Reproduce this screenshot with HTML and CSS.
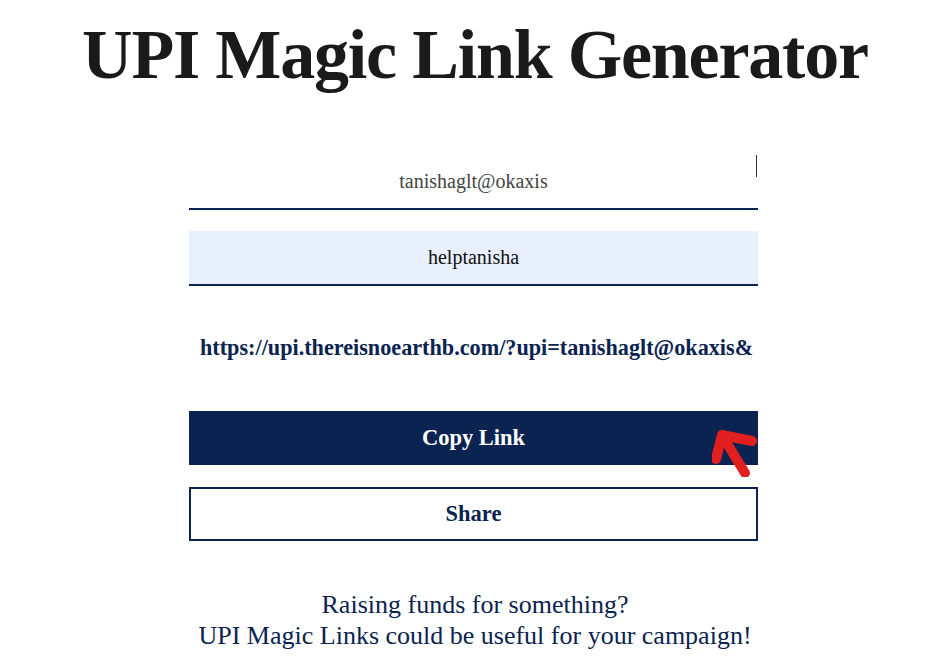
FILE: index.html
```html
<!DOCTYPE html>
<html>
<head>
<meta charset="utf-8">
<link rel="stylesheet" href="styles.css">
</head>
<body>
<h1 class="title">UPI Magic Link Generator</h1>
<main class="form">
  <div class="field field-upi">
    <input class="input" type="text" value="tanishaglt@okaxis">
    <span class="caret"></span>
  </div>
  <div class="field field-name">
    <input class="input input-filled" type="text" value="helptanisha">
  </div>
  <div class="link">https://upi.thereisnoearthb.com/?upi=tanishaglt@okaxis&amp;</div>
  <div class="btn-wrap">
    <button class="btn btn-primary">Copy Link</button>
    <svg class="arrow" width="50" height="50" viewBox="0 0 50 50">
      <path d="M10 8 L33 46 M10 8 L40 14 M10 8 L4 32" fill="none" stroke="#e21f1f" stroke-width="10" stroke-linecap="round" stroke-linejoin="round"/>
    </svg>
  </div>
  <button class="btn btn-outline">Share</button>
</main>
<p class="note">Raising funds for something?<br>UPI Magic Links could be useful for your campaign!</p>
</body>
</html>
```
FILE: styles.css
```css
html, body {
  margin: 0;
  padding: 0;
  background: #fff;
}
body {
  font-family: "Liberation Serif", "Times New Roman", serif;
  color: #0a2350;
}
.title {
  margin: 15px 0 0;
  text-align: center;
  font-size: 70px;
  line-height: 80px;
  letter-spacing: -1.2px;
  font-weight: bold;
  color: #1a1a1a;
}
.form {
  width: 569px;
  margin: 59px 0 0 calc(50% - 286px);
  display: flex;
  flex-direction: column;
}
.field {
  position: relative;
}
.field-name {
  margin-top: 21px;
}
.input {
  display: block;
  box-sizing: border-box;
  width: 100%;
  height: 56px;
  border: none;
  border-bottom: 2px solid #0a2350;
  background: #fff;
  text-align: center;
  font-family: "Liberation Serif", serif;
  font-size: 20px;
  color: #444;
  outline: none;
  padding: 0;
}
.field-name .input {
  height: 55px;
}
.input-filled {
  background: #e8f0fe;
  color: #111;
}
.caret {
  position: absolute;
  right: 1px;
  top: 1px;
  width: 1px;
  height: 22px;
  background: #333;
}
.link {
  margin-top: 48px;
  padding-left: 11px;
  white-space: nowrap;
  font-weight: bold;
  font-size: 22.2px;
  line-height: 28px;
  color: #0a2350;
}
.btn-wrap {
  position: relative;
  margin-top: 49px;
}
.btn {
  display: block;
  box-sizing: border-box;
  width: 100%;
  height: 54px;
  font-family: "Liberation Serif", serif;
  font-weight: bold;
  font-size: 22.5px;
  cursor: pointer;
}
.btn-primary {
  background: #0a2350;
  color: #fff;
  border: none;
}
.btn-outline {
  margin-top: 22px;
  background: #fff;
  color: #0a2350;
  border: 2px solid #0a2350;
}
.arrow {
  position: absolute;
  left: 523px;
  top: 16px;
}
.note {
  margin: 48px 0 0;
  text-align: center;
  font-size: 26px;
  line-height: 31px;
  color: #0a2350;
}
```
